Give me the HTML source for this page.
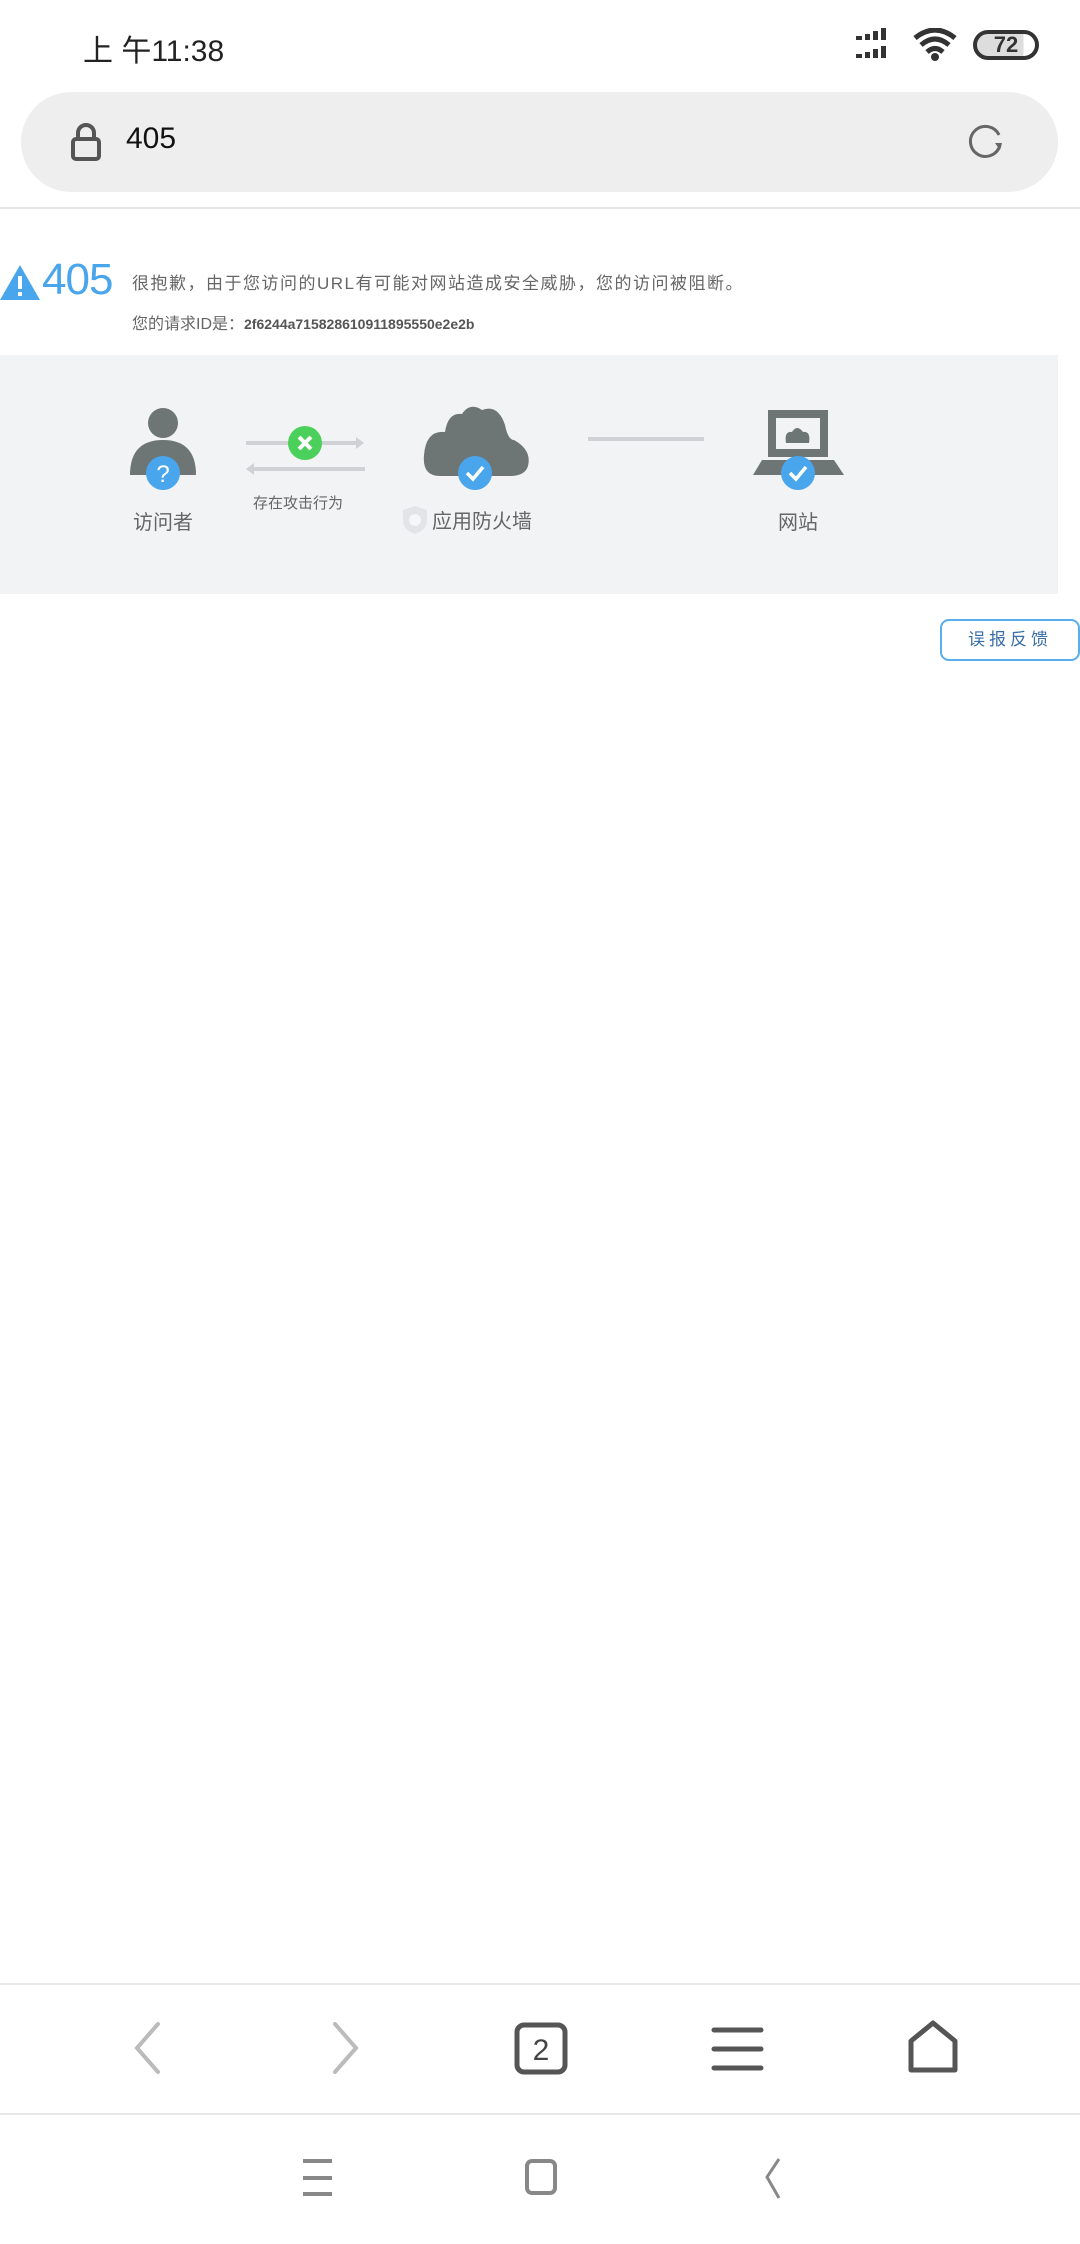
<!DOCTYPE html>
<html><head><meta charset="utf-8"><style>
*{margin:0;padding:0;box-sizing:border-box}
body{width:1080px;height:2244px;background:#fff;position:relative;overflow:hidden;font-family:"Liberation Sans","Noto Sans CJK SC",sans-serif}
.a{position:absolute}
</style></head><body>
<div class="a" style="left:83px;top:26px;font-size:30px;color:#222">上 午11:38</div>
<svg class="a" style="left:856px;top:28px" width="46" height="34" viewBox="0 0 46 34" fill="#333">
<rect x="0" y="8" width="6" height="4"/><rect x="9" y="6" width="5" height="6"/><rect x="17" y="3" width="5" height="9"/><rect x="25" y="0" width="5" height="12"/>
<rect x="0" y="26" width="6" height="4"/><rect x="9" y="24" width="5" height="6"/><rect x="17" y="21" width="5" height="9"/><rect x="25" y="18" width="5" height="12"/></svg>
<svg class="a" style="left:913px;top:28px" width="46" height="36" viewBox="0 0 46 36"><path d="M2 10 Q22 -6 42 10 M8 17 Q22 5 36 17 M14 24 Q22 17 30 24" stroke="#333" stroke-width="5" fill="none"/><circle cx="22" cy="29" r="4" fill="#333"/></svg>
<div class="a" style="left:973px;top:30px;width:66px;height:30px;border:4px solid #333;border-radius:15px;text-align:center;font-size:22px;line-height:22px;font-weight:bold;color:#333;background:linear-gradient(90deg,#ddd 80%,#fff 80%)">72</div>
<div class="a" style="left:21px;top:92px;width:1037px;height:100px;background:#eeeeee;border-radius:50px"></div>
<svg class="a" style="left:70px;top:122px" width="32" height="40" viewBox="0 0 32 40"><path d="M8 17 V11 a8 8 0 0 1 16 0 V17" stroke="#555" stroke-width="4" fill="none"/><rect x="3" y="17" width="26" height="20" rx="3" stroke="#555" stroke-width="4" fill="none"/></svg>
<div class="a" style="left:126px;top:122px;font-size:30px;color:#111">405</div>
<svg class="a" style="left:966px;top:121px" width="40" height="40" viewBox="0 0 40 40"><path d="M33 14 A15 15 0 1 0 34 24" stroke="#666" stroke-width="3" fill="none"/><path d="M29 22 L36 22 L34 29Z" fill="#666"/></svg>
<div class="a" style="left:0;top:207px;width:1080px;height:2px;background:#e5e5e5"></div>

<svg class="a" style="left:0;top:265px" width="40" height="35" viewBox="0 0 40 35"><path d="M20 0 L40 35 H0Z" fill="#4aa6ec"/><rect x="18" y="11" width="4" height="13" fill="#fff"/><rect x="18" y="27" width="4" height="4" fill="#fff"/></svg>
<div class="a" style="left:42px;top:255px;font-size:44px;color:#4aa6ec;letter-spacing:-1px">405</div>
<div class="a" style="left:132px;top:269px;font-size:17px;color:#666;letter-spacing:1.5px">很抱歉，由于您访问的URL有可能对网站造成安全威胁，您的访问被阻断。</div>
<div class="a" style="left:132px;top:310px;font-size:16px;color:#666">您的请求ID是：<b style="color:#555;font-size:14px">2f6244a715828610911895550e2e2b</b></div>

<div class="a" style="left:0;top:355px;width:1058px;height:239px;background:#f2f3f5"></div>
<svg class="a" style="left:0;top:355px" width="1058" height="239" viewBox="0 355 1058 239">
<circle cx="163" cy="423" r="15" fill="#6d7575"/>
<path d="M130 475 Q130 440 163 440 Q196 440 196 475Z" fill="#6d7575"/>
<circle cx="163" cy="473" r="17" fill="#4aa6ec"/>
<text x="163" y="482" font-size="24" fill="#fff" text-anchor="middle" font-family="Liberation Sans">?</text>
<path d="M246 443 H356" stroke="#cfd1d5" stroke-width="4"/><path d="M356 437 L364 443 L356 449Z" fill="#cfd1d5"/>
<path d="M254 469 H365" stroke="#cfd1d5" stroke-width="4"/><path d="M254 463 L246 469 L254 475Z" fill="#cfd1d5"/>
<circle cx="305" cy="443" r="17" fill="#4cd05c"/><path d="M299 437 L311 449 M311 437 L299 449" stroke="#fff" stroke-width="4"/>
<path d="M440 476 Q422 476 424 455 Q426 430 445 432 Q448 412 462 414 Q470 402 482 410 Q498 404 505 425 Q508 440 514 440 Q532 450 528 466 Q525 476 510 476Z" fill="#6d7575"/>
<circle cx="475" cy="473" r="17" fill="#4aa6ec"/><path d="M467 473 L473 479 L483 467" stroke="#fff" stroke-width="3.5" fill="none"/>
<path d="M588 439 H704" stroke="#cfd1d5" stroke-width="4"/>
<rect x="768" y="410" width="60" height="47" fill="#6d7575"/><rect x="776" y="418" width="44" height="31" fill="#f2f3f5"/>
<path d="M786 443 Q784 431 792 432 Q797 424 803 432 Q811 431 809 443Z" fill="#6d7575"/>
<path d="M762 460 H834 L844 475 H753Z" fill="#6d7575"/>
<circle cx="798" cy="473" r="17" fill="#4aa6ec"/><path d="M790 473 L796 479 L806 467" stroke="#fff" stroke-width="3.5" fill="none"/>
</svg>
<div class="a" style="left:253px;top:492px;font-size:15px;color:#666">存在攻击行为</div>
<div class="a" style="left:133px;top:506px;font-size:20px;color:#666">访问者</div>
<svg class="a" style="left:402px;top:505px" width="26" height="30" viewBox="0 0 26 30"><path d="M13 1 L25 5 V15 Q25 25 13 29 Q1 25 1 15 V5Z" fill="#e2e4e8"/><circle cx="13" cy="15" r="6" fill="#f5f6f8"/></svg>
<div class="a" style="left:432px;top:505px;font-size:20px;color:#666">应用防火墙</div>
<div class="a" style="left:778px;top:506px;font-size:20px;color:#666">网站</div>
<div class="a" style="left:940px;top:619px;width:140px;height:42px;border:2px solid #5aaeee;border-radius:9px;text-align:center;font-size:17px;line-height:38px;color:#3a6ea8;letter-spacing:4px">误报反馈</div>

<div class="a" style="left:0;top:1983px;width:1080px;height:2px;background:#e8e8e8"></div>
<svg class="a" style="left:0;top:1985px" width="1080" height="128" viewBox="0 0 1080 128">
<path d="M158 39 L137 63 L158 87" stroke="#bbb" stroke-width="4" fill="none" stroke-linecap="round"/>
<path d="M335 39 L356 63 L335 87" stroke="#bbb" stroke-width="4" fill="none" stroke-linecap="round"/>
<rect x="517" y="40" width="48" height="47" rx="7" stroke="#555" stroke-width="5" fill="none"/>
<text x="541" y="75" font-size="30" fill="#444" text-anchor="middle" font-family="Liberation Sans">2</text>
<path d="M714 45 H761 M714 64 H761 M714 83 H761" stroke="#555" stroke-width="5" stroke-linecap="round"/>
<path d="M911 85 V56 L933 38 L955 56 V85Z" stroke="#555" stroke-width="5" fill="none" stroke-linejoin="round"/>
</svg>
<div class="a" style="left:0;top:2113px;width:1080px;height:2px;background:#e8e8e8"></div>
<svg class="a" style="left:0;top:2115px" width="1080" height="129" viewBox="0 0 1080 129">
<path d="M303 46 H332 M303 63 H332 M303 79 H332" stroke="#888" stroke-width="4"/>
<rect x="527" y="46" width="28" height="32" rx="5" stroke="#888" stroke-width="4" fill="none"/>
<path d="M779 44 L767 62 L779 83" stroke="#888" stroke-width="3" fill="none"/>
</svg>
</body></html>
